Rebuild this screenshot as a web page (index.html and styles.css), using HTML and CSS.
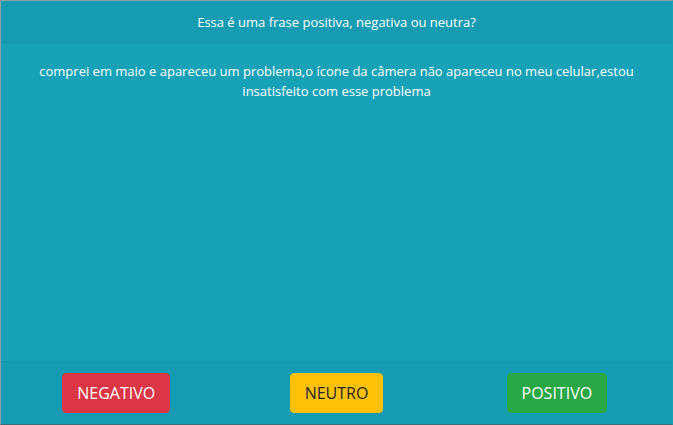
FILE: index.html
```html
<!DOCTYPE html>
<html lang="pt">
<head>
<meta charset="utf-8">
<title>Classificação</title>
<link rel="stylesheet" href="styles.css">
</head>
<body>
<div class="card">
  <div class="card-header">Essa é uma frase positiva, negativa ou neutra?</div>
  <div class="card-body">comprei em maio e apareceu um problema,o ícone da câmera não apareceu no meu celular,estou insatisfeito com esse problema</div>
  <div class="card-footer">
    <div class="row">
      <div class="col"><button class="btn btn-danger">NEGATIVO</button></div>
      <div class="col"><button class="btn btn-warning">NEUTRO</button></div>
      <div class="col"><button class="btn btn-success">POSITIVO</button></div>
    </div>
  </div>
</div>
</body>
</html>
```
FILE: styles.css
```css
* { box-sizing: border-box; }
html, body { margin: 0; height: 100%; }
body {
  font-family: "Open Sans", "Noto Sans", sans-serif;
  color: #fff;
}
.card {
  height: 425px;
  display: flex;
  flex-direction: column;
  background: #17a2b8;
  border: 1px solid #8a9ea3;
  border-right-color: #17a2b8;
  border-bottom-color: #3d6e76;
}
.card-header {
  height: 42px;
  display: flex;
  align-items: center;
  justify-content: center;
  font-size: 13px;
  background: rgba(0,0,0,0.03);
  border-bottom: 1px solid rgba(0,0,0,0.05);
}
.card-body {
  flex: 1;
  padding: 18px 20px;
  text-align: center;
  font-size: 13px;
  line-height: 20px;
}
.card-footer {
  padding: 11px 20px 11px;
  background: rgba(0,0,0,0.03);
  border-top: 1px solid rgba(0,0,0,0.05);
}
.row {
  display: flex;
  margin: 0 -15px;
}
.col {
  flex: 1;
  display: flex;
  justify-content: center;
}
.btn {
  font-family: inherit;
  font-size: 16px;
  line-height: 24px;
  padding: 7px 14px;
  border: 1px solid transparent;
  border-radius: 4px;
  color: #fff;
}
.btn-danger { background: #dc3545; border-color: #dc3545; }
.btn-warning { background: #ffc107; border-color: #ffc107; color: #212529; }
.btn-success { background: #28a745; border-color: #28a745; }
```
